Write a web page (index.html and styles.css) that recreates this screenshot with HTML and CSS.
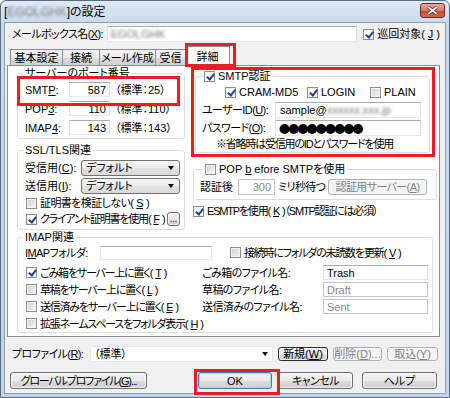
FILE: index.html
```html
<!DOCTYPE html>
<html lang="ja">
<head>
    <meta charset="UTF-8">
    <meta name="viewport" content="width=device-width, initial-scale=1.0">
    <title>の設定</title>
    <link rel="stylesheet" href="styles.css">
</head>
<body>
    <div class="window">
        <div class="titlebar">
            <span class="title">[<span class="blur">EGOLGHK</span>]の設定</span>
            <span class="close">
                <svg width="11" height="9" viewBox="0 0 11 9"><path d="M1.5 1.2l8 6.6M9.5 1.2l-8 6.6" stroke="#5a1f1f" stroke-width="3.4"/><path d="M1.5 1.2l8 6.6M9.5 1.2l-8 6.6" stroke="#fff" stroke-width="1.8"/></svg>
            </span>
        </div>

        <div class="client">
            <div class="mbox-row">
                <span class="mbox-label tight">メールボックス名(<u>X</u>):</span>
                <span class="input mbox-input"><span class="blur">EGOLGHK</span></span>
                <span class="check mbox-check"><span class="cb on"></span>巡回対象(<u>J</u>)</span>
            </div>

            <div class="tabs">
                <span class="tab tab-basic">基本設定</span>
                <span class="tab tab-conn">接続</span>
                <span class="tab tab-compose">メール作成</span>
                <span class="tab tab-recv">受信</span>
                <span class="tab tab-detail active">詳細</span>
            </div>

            <div class="panel">
                <div class="cols">
                    <div class="col-left">
                        <fieldset class="group port-group">
                            <legend>サーバーのポート番号</legend>
                            <div class="port-row">
                                <span class="port-label">SMT<u>P</u>:</span>
                                <span class="input num port-input">587</span>
                                <span class="port-note">（標準：25）</span>
                            </div>
                            <div class="port-row">
                                <span class="port-label">POP<u>3</u>:</span>
                                <span class="input num port-input">110</span>
                                <span class="port-note">（標準：110）</span>
                            </div>
                            <div class="port-row">
                                <span class="port-label">IMAP<u>4</u>:</span>
                                <span class="input num port-input">143</span>
                                <span class="port-note">（標準：143）</span>
                            </div>
                        </fieldset>

                        <fieldset class="group ssl-group">
                            <legend>SSL/TLS関連</legend>
                            <div class="ssl-row">
                                <span class="ssl-label">受信用(<u>C</u>):</span>
                                <span class="combo">デフォルト<span class="arrow"></span></span>
                            </div>
                            <div class="ssl-row">
                                <span class="ssl-label">送信用(<u>I</u>):</span>
                                <span class="combo">デフォルト<span class="arrow"></span></span>
                            </div>
                            <div class="check-row">
                                <span class="check tight"><span class="cb"></span>証明書を検証しない(<u>S</u>)</span>
                            </div>
                            <div class="check-row">
                                <span class="check tighter"><span class="cb on"></span>クライアント証明書を使用(<u>F</u>)</span>
                                <span class="btn dots-btn">...</span>
                            </div>
                        </fieldset>
                    </div>

                    <div class="col-right">
                        <fieldset class="group auth-group">
                            <legend><span class="check"><span class="cb on"></span>SMTP認証</span></legend>
                            <div class="auth-types">
                                <span class="check type-cram"><span class="cb on"></span>CRAM-MD5</span>
                                <span class="check type-login"><span class="cb on"></span>LOGIN</span>
                                <span class="check"><span class="cb"></span>PLAIN</span>
                            </div>
                            <div class="auth-row">
                                <span class="auth-label tight">ユーザーID(<u>U</u>):</span>
                                <span class="input auth-input">sample@<span class="blur">xxxxxx.xxx.jp</span></span>
                            </div>
                            <div class="auth-row">
                                <span class="auth-label tight">パスワード(<u>O</u>):</span>
                                <span class="input auth-input pass">●●●●●●●●●</span>
                            </div>
                            <div class="auth-note tighter">※省略時は受信用のIDとパスワードを使用</div>
                        </fieldset>

                        <fieldset class="group pop-group">
                            <legend><span class="check"><span class="cb"></span>POP <u>b</u>efore SMTPを使用</span></legend>
                            <div class="pop-row">
                                <span class="pop-label">認証後</span>
                                <span class="input num disabled pop-input">300</span>
                                <span class="pop-unit tight">ミリ秒待つ</span>
                                <span class="btn disabled pop-btn tight">認証用サーバー(<u>A</u>)</span>
                            </div>
                        </fieldset>

                        <div class="esmtp-row">
                            <span class="check tighter"><span class="cb on"></span>ESMTPを使用(<u>K</u>)（SMTP認証には必須）</span>
                        </div>
                    </div>
                </div>

                <fieldset class="group imap-group">
                    <legend>IMAP関連</legend>
                    <div class="imap-top">
                        <span class="imap-label tight">I<u>M</u>APフォルダ:</span>
                        <span class="input imap-folder"></span>
                        <span class="check imap-unread tighter"><span class="cb"></span>接続時にフォルダの未読数を更新(<u>V</u>)</span>
                    </div>
                    <div class="imap-grid">
                        <span class="check tighter"><span class="cb on"></span>ごみ箱をサーバー上に置く(<u>T</u>)</span>
                        <span class="file-cell"><span class="file-label tight">ごみ箱のファイル名:</span><span class="input file-input">Trash</span></span>

                        <span class="check tighter"><span class="cb"></span>草稿をサーバー上に置く(<u>L</u>)</span>
                        <span class="file-cell"><span class="file-label tight">草稿のファイル名:</span><span class="input disabled file-input">Draft</span></span>

                        <span class="check tighter"><span class="cb"></span>送信済みをサーバー上に置く(<u>E</u>)</span>
                        <span class="file-cell"><span class="file-label tight">送信済みのファイル名:</span><span class="input disabled file-input">Sent</span></span>

                        <span class="check tighter"><span class="cb"></span>拡張ネームスペースをフォルダ表示(<u>H</u>)</span>
                    </div>
                </fieldset>
            </div>

            <div class="profile-row">
                <span class="profile-label tight">プロファイル(<u>R</u>):</span>
                <span class="profile-combo">（標準）<span class="arrow"></span></span>
                <span class="btn small default-small">新規(<u>W</u>)</span>
                <span class="btn small disabled btn-del">削除(<u>D</u>)...</span>
                <span class="btn small disabled btn-import">取込(<u>Y</u>)</span>
            </div>

            <div class="button-row">
                <span class="btn btn-global tighter">グローバルプロファイル(<u>G</u>)...</span>
                <span class="btn btn-ok">OK</span>
                <span class="btn btn-cancel tight">キャンセル</span>
                <span class="btn btn-help">ヘルプ</span>
            </div>
        </div>

        <!-- 注目箇所の赤枠 -->
        <span class="mark mark-tab"></span>
        <span class="mark mark-port"></span>
        <span class="mark mark-auth"></span>
        <span class="mark mark-ok"></span>
    </div>
</body>
</html>
```

FILE: styles.css
```css
* {
    box-sizing: border-box;
}

body {
    margin: 0;
    font-family: "Liberation Sans", "Noto Sans CJK JP", sans-serif;
    font-size: 11px;
    line-height: 14px;
    color: #000;
    white-space: nowrap;
    font-feature-settings: "palt";
}

u {
    text-decoration-thickness: 1px;
    text-underline-offset: 1px;
}

/* かな主体の文字列を詰める */
.tight {
    letter-spacing: -0.6px;
}

.tighter {
    letter-spacing: -1.2px;
}

.window {
    position: relative;
    width: 450px;
    height: 398px;
    display: flex;
    flex-direction: column;
    background: linear-gradient(#dfe9f5, #c9d9ed 22px, #c2d3ea);
    border: 1px solid #5b6d85;
    border-radius: 6px 6px 0 0;
}

.titlebar {
    height: 21px;
    display: flex;
    align-items: center;
    padding: 0 4px 0 3px;
    font-size: 12px;
}

.title {
    flex: 1;
}

.blur {
    filter: blur(1.4px);
    color: #7b7b7b;
}

.close {
    width: 25px;
    height: 15px;
    margin-top: -3px;
    display: flex;
    align-items: center;
    justify-content: center;
    border: 1px solid #6b2a24;
    border-radius: 3px;
    background: linear-gradient(#eba999, #d77a63 50%, #c4482f 51%, #d06a4f);
}

.client {
    flex: 1;
    margin: 0 3px 3px;
    padding: 0 5px 0 2px;
    background: #f0f0f0;
    border: 1px solid #8d9fb6;
}

/* 入力欄・ボタン共通 */
.input {
    display: flex;
    align-items: center;
    padding: 0 3px;
    background: #fff;
    border: 1px solid;
    border-color: #abadb3 #dbdfe6 #e3e9ef #e2e3ea;
    overflow: hidden;
}

.input.num {
    justify-content: flex-end;
}

.input.disabled {
    color: #8a8a8a;
    border-color: #c2c4c9;
}

.btn {
    display: flex;
    align-items: center;
    justify-content: center;
    border: 1px solid #707070;
    border-radius: 3px;
    background: linear-gradient(#f2f2f2, #ebebeb 50%, #dddddd 51%, #cfcfcf);
    box-shadow: inset 0 0 0 1px rgba(255, 255, 255, 0.7);
}

.btn.disabled {
    color: #838383;
    border-color: #adb2b5;
    background: #f4f4f4;
}

.check {
    display: flex;
    align-items: center;
    gap: 3px;
}

.cb {
    position: relative;
    flex: none;
    width: 11px;
    height: 11px;
    border: 1px solid #8e8f8f;
    background: linear-gradient(135deg, #cfd2d6, #f7f7f7);
    box-shadow: inset 0 0 0 1px #f4f4f4;
}

.cb.on {
    background: #fff;
}

.cb.on::after {
    content: "";
    position: absolute;
    left: 3px;
    top: 0;
    width: 3px;
    height: 6px;
    border: solid #23408e;
    border-width: 0 2px 2px 0;
    transform: rotate(38deg);
}

.arrow {
    width: 0;
    height: 0;
    margin-left: auto;
    border-left: 3.5px solid transparent;
    border-right: 3.5px solid transparent;
    border-top: 4px solid #000;
}

/* メールボックス名 */
.mbox-row {
    display: flex;
    align-items: center;
    height: 16px;
    margin-top: 3px;
    padding-left: 5px;
}

.mbox-label {
    width: 96px;
}

.mbox-input {
    width: 254px;
    height: 16px;
}

.mbox-check {
    margin-left: 6px;
}

/* タブ */
.tabs {
    display: flex;
    align-items: flex-end;
    height: 19px;
    margin-top: 4px;
    padding-left: 3px;
}

.tab {
    height: 16px;
    display: flex;
    align-items: center;
    justify-content: center;
    border: 1px solid #898c95;
    border-bottom: none;
    margin-right: -1px;
    background: linear-gradient(#f2f2f2, #ebebeb 50%, #dddddd 51%, #cfcfcf);
}

.tab.active {
    position: relative;
    z-index: 1;
    height: 20px;
    margin-bottom: -1px;
    background: #fff;
}

.tab-basic { width: 53px; }
.tab-conn { width: 38px; }
.tab-compose { width: 57px; }
.tab-recv { width: 31px; }
.tab-detail { width: 45px; }

.panel {
    height: 272px;
    padding: 0 2px 0 9px;
    background: #fff;
    border: 1px solid #898c95;
}

.cols {
    display: flex;
    align-items: flex-start;
    height: 164px;
}

.col-left {
    width: 168px;
}

.col-right {
    width: 244px;
    margin-left: 8px;
}

.group {
    margin: 0;
    padding: 0;
    min-width: 0;
    border: 1px solid #d5dfe5;
    border-radius: 3px;
}

.group legend {
    padding: 0 2px;
    height: 14px;
}

/* ポート番号 */
.port-group {
    padding: 0 0 1px 5px;
}

.port-row {
    display: flex;
    align-items: center;
    height: 19px;
    padding-left: 2px;
}

.port-label {
    width: 44px;
}

.port-input {
    width: 41px;
    height: 15px;
}

.port-note {
    margin-left: 5px;
}

/* SSL/TLS */
.ssl-group {
    margin-top: 4px;
    padding: 2px 0 2px 5px;
}

.ssl-row {
    display: flex;
    align-items: center;
    height: 18px;
    padding-left: 2px;
}

.ssl-label {
    width: 56px;
}

.combo {
    width: 99px;
    height: 16px;
    display: flex;
    align-items: center;
    padding: 0 5px 0 4px;
    border: 1px solid #707070;
    border-radius: 3px;
    background: linear-gradient(#f6f6f6, #ececec 50%, #e2e2e2 51%, #dadada);
}

.check-row {
    display: flex;
    align-items: center;
    height: 16px;
    padding-left: 3px;
}

.dots-btn {
    width: 13px;
    height: 14px;
    margin: 0 4px 0 auto;
    font-size: 9px;
    line-height: 12px;
}

/* SMTP認証 */
.auth-group {
    width: 235px;
    margin-top: 3px;
    margin-left: 2px;
    padding: 0 0 1px 7px;
}

.auth-group legend {
    padding: 0 2px 0 1px;
}

.auth-types {
    display: flex;
    align-items: center;
    height: 18px;
    padding-left: 22px;
}

.type-cram {
    width: 82px;
}

.type-login {
    width: 63px;
}

.auth-row {
    display: flex;
    align-items: center;
    height: 18px;
    margin-left: -1px;
}

.auth-row + .auth-row {
    height: 17px;
}

.auth-label {
    width: 73px;
}

.auth-input {
    width: 146px;
    height: 16px;
    padding-left: 4px;
}

.auth-input.pass {
    padding-left: 3px;
    font-family: "Noto Sans CJK JP", sans-serif;
    font-size: 11px;
    letter-spacing: -1.8px;
}

.auth-note {
    height: 14px;
    margin-top: 1px;
    padding-left: 13px;
}

/* POP before SMTP */
.pop-group {
    margin-top: 9px;
    padding: 0 0 3px 9px;
}

.pop-row {
    display: flex;
    align-items: center;
    height: 18px;
    margin: 2px 0 0 -3px;
}

.pop-label {
    width: 38px;
}

.pop-input {
    width: 37px;
    height: 16px;
}

.pop-unit {
    margin-left: 3px;
}

.pop-btn {
    width: 99px;
    height: 16px;
    margin: 0 9px 0 auto;
}

.esmtp-row {
    display: flex;
    align-items: center;
    height: 16px;
    margin-top: 3px;
}

/* IMAP関連 */
.imap-group {
    width: 416px;
    padding: 0 0 0 5px;
}

.imap-top {
    display: flex;
    align-items: center;
    height: 17px;
    padding-left: 2px;
}

.imap-label {
    width: 75px;
}

.imap-folder {
    width: 112px;
    height: 14px;
}

.imap-unread {
    margin-left: 18px;
}

.imap-grid {
    display: grid;
    grid-template-columns: 179px 1fr;
    grid-auto-rows: 17px;
    margin-top: 3px;
}

.imap-grid > .check {
    padding-left: 3px;
}

.file-cell {
    display: flex;
    align-items: center;
}

.file-label {
    width: 121px;
}

.file-input {
    width: 105px;
    height: 15px;
}

/* プロファイル */
.profile-row {
    display: flex;
    align-items: center;
    height: 16px;
    margin-top: 9px;
    padding-left: 5px;
}

.profile-label {
    width: 78px;
}

.profile-combo {
    width: 183px;
    height: 16px;
    display: flex;
    align-items: center;
    padding: 0 4px 0 3px;
    background: #fff;
    border: 1px solid #e3e9ef;
}

.btn.small {
    height: 14px;
    margin-left: 5px;
}

.default-small {
    width: 50px;
    border-color: #2b2b2b;
}

.btn-del {
    width: 49px;
}

.btn-import {
    width: 51px;
}

/* 下部ボタン */
.button-row {
    display: flex;
    align-items: center;
    height: 17px;
    margin-top: 10px;
    padding-left: 3px;
}

.btn-global {
    width: 137px;
    height: 17px;
}

.btn-ok {
    width: 74px;
    height: 17px;
    margin-left: 51px;
    border-color: #3c7fb1;
    box-shadow: inset 0 0 0 1px #9fdcfb;
}

.btn-cancel {
    width: 75px;
    height: 17px;
    margin-left: 6px;
}

.btn-help {
    width: 75px;
    height: 17px;
    margin-left: 9px;
}

/* 赤枠 */
.mark {
    position: absolute;
    border: 3px solid #ea1c24;
    z-index: 5;
}

.mark-tab {
    left: 184px;
    top: 42px;
    width: 51px;
    height: 24px;
}

.mark-port {
    left: 16px;
    top: 75px;
    width: 163px;
    height: 30px;
}

.mark-auth {
    left: 190px;
    top: 66px;
    width: 244px;
    height: 90px;
}

.mark-ok {
    left: 193px;
    top: 368px;
    width: 86px;
    height: 26px;
}
```
